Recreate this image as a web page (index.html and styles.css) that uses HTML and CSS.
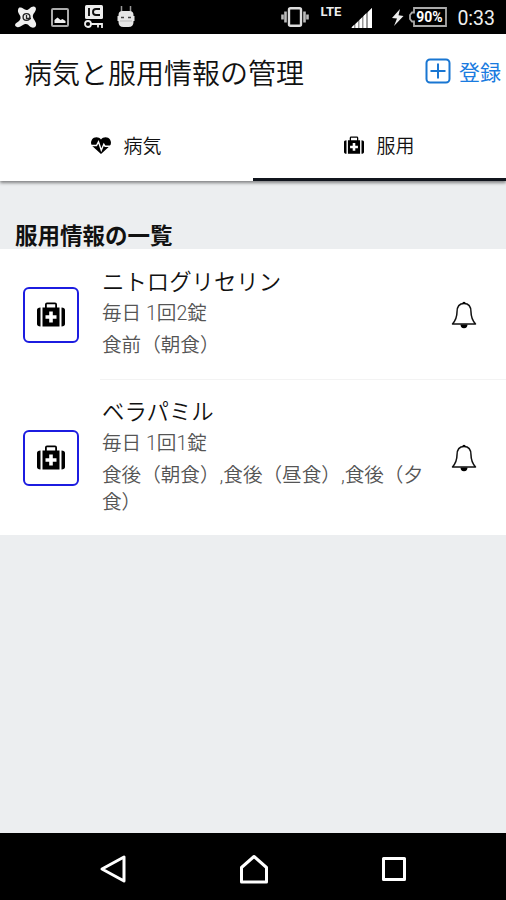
FILE: index.html
```html
<!DOCTYPE html>
<html lang="ja">
<head>
<meta charset="utf-8">
<title>病気と服用情報の管理</title>
<link rel="stylesheet" href="styles.css">
</head>
<body>
<svg class="defs" width="0" height="0">
  <symbol id="medkit" viewBox="0 0 28 26">
    <path d="M3.500 5.500v19C1.200 24.500 0 23.500 0 22V8c0-1.500 1.200-2.500 3.500-2.500zM24.500 5.500v19c2.300 0 3.500-1 3.500-2.500V8c0-1.500-1.200-2.500-3.500-2.500z"/>
    <path fill-rule="evenodd" d="M5.500 5.500H8V2.500Q8 .500 10 .500h8Q20 .500 20 2.500v3h2.500v19h-17zM9.800 5.500h8.400V2.300H9.800zM12.200 9.500v3.700H8.500v3.600h3.700v3.700h3.600v-3.700h3.700v-3.600h-3.700V9.500z"/>
  </symbol>
  <symbol id="bell" viewBox="0 0 26 28">
    <path d="M13 2.500C7.800 2.500 6 6 6 11c0 6-1.500 8.500-4.500 12h23C21.500 19.500 20 17 20 11c0-5-1.800-8.500-7-8.500z" fill="none" stroke="currentColor" stroke-width="1.500" stroke-linejoin="round"/>
    <path d="M11.300 2.500a1.700 1.700 0 0 1 3.400 0zM9.500 23.500h7a3.500 3.700 0 0 1-7 0z"/>
  </symbol>
</svg>
<div class="screen">
  <div class="status">
    <div class="notices">
      <svg width="24" height="24" viewBox="0 0 24 24"><path d="M7 2.500c2 0 3 2.500 5.500 2.500S17 1 20 1.500c3 1 2 4 .500 6-1.500 2-2 3-1.500 5s4 5 3 8-4.500 2.500-6 1-2.500-3-5-2.500S6 23 3 22s-2-3.500 0-4.500 4-3 3.500-5.500S3.500 8 4 5s1.500-2.500 3-2.500z" fill="#f0f0f0"/><circle cx="12.500" cy="12" r="3.400" fill="none" stroke="#222" stroke-width="1.400"/><path d="M12.500 10v3.500H17" fill="none" stroke="#222" stroke-width="1.300"/></svg>
      <svg width="18" height="19" viewBox="0 0 18 19"><rect x="1" y="1" width="16" height="17" rx="1" fill="none" stroke="#aaa" stroke-width="2"/><path d="M3.500 15v-3l3-2.500 3 2.500 2-1 3 2v2z" fill="#eee"/></svg>
      <svg width="20" height="24" viewBox="0 0 20 24"><rect x="1" y="0" width="18" height="14" rx="1.500" fill="#eee"/><path d="M5 3v8M16 4h-4q-3 0-3 3t3 3h4" fill="none" stroke="#111" stroke-width="1.900"/><circle cx="4" cy="19" r="3" fill="none" stroke="#eee" stroke-width="1.800"/><path d="M7 19h11v4M14 19v3.500" fill="none" stroke="#eee" stroke-width="1.800"/></svg>
      <svg width="18" height="22" viewBox="0 0 18 22"><path d="M4.500 6V0M13.500 6V0" stroke="#999" stroke-width="1.500"/><path d="M1.500 9q0-4 4-4h7q4 0 4 4v1h1v5h-1v1q0 5-5 5h-5q-5 0-5-5v-1h-1v-5h1z" fill="#e6e6e6"/><path d="M4 11.500h3M11 11.500h3" stroke="#444" stroke-width="1.500"/><path d="M3 15h12" stroke="#bbb"/></svg>
    </div>
    <div class="system">
      <svg width="28" height="20" viewBox="0 0 28 20"><path d="M1.500 7.500v5M4.500 4.500v11M26.500 7.500v5M23.500 4.500v11" stroke="#bbb" stroke-width="2.600"/><rect x="8" y="1.200" width="12" height="17.600" rx="1.500" fill="none" stroke="#ddd" stroke-width="2.400"/></svg>
      <span class="lte">LTE</span>
      <svg class="signal" width="22" height="21" viewBox="0 0 22 21"><path d="M0 20L21 0v20z" fill="#999"/><path d="M1 20v-1l2-2v3zM4.500 20v-4l2.500-2.500V20zM8.500 20v-8l2.500-2.500V20zM12.500 20V8L15 5.500V20zM17 20V4l4-4v20z" fill="#fff"/></svg>
      <svg class="bolt" width="12" height="17" viewBox="0 0 12 17"><path d="M8 0L0 9l5 .500L2 17l9.500-10-5-.700z" fill="#eee"/></svg>
      <svg class="battery" width="38" height="20" viewBox="0 0 38 20"><path d="M5 1h32v18H5v-4.500H3L1 12V8l2-2.500h2z" fill="none" stroke="#aaa" stroke-width="1.800"/><text x="20.500" y="15" text-anchor="middle" class="charge">90%</text></svg>
      <span class="clock">0:33</span>
    </div>
  </div>
  <header class="header">
    <h1>病気と服用情報の管理</h1>
    <div class="register">
      <svg width="26" height="26" viewBox="0 0 26 26"><rect x="1.500" y="1.500" width="23" height="23" rx="3.500"/><path d="M13 5.500v15M5.500 13h15"/></svg>
      <span>登録</span>
    </div>
  </header>
  <nav class="tabs">
    <div class="tab">
      <svg width="20" height="17" viewBox="0 0 20 17"><path d="M10 2.500C8-.500 3-.700 1 2.500-.500 5-.200 7 1.200 9L10 17l8.800-8c1.400-2 1.700-4 .200-6.500-2-3.200-7-3-9 0z"/><path d="M0 8.500h5.500l2-3.800 2.800 8.500 2.500-6 1.200 2H20" fill="none" stroke="#fff" stroke-width="1.400"/></svg>
      <span>病気</span>
    </div>
    <div class="tab active">
      <svg width="20" height="19"><use href="#medkit"/></svg>
      <span>服用</span>
    </div>
  </nav>
  <main>
    <h2>服用情報の一覧</h2>
    <ul class="list">
      <li class="item">
        <div class="thumb"><svg width="28" height="26"><use href="#medkit"/></svg></div>
        <div class="body">
          <div class="text"><h3>ニトログリセリン</h3><p>毎日 1回2錠</p><p class="timing">食前（朝食）</p></div>
          <svg class="alarm" width="26" height="28"><use href="#bell"/></svg>
        </div>
      </li>
      <li class="item">
        <div class="thumb"><svg width="28" height="26"><use href="#medkit"/></svg></div>
        <div class="body">
          <div class="text"><h3>ベラパミル</h3><p>毎日 1回1錠</p><p class="timing">食後（朝食）,食後（昼食）,食後（夕食）</p></div>
          <svg class="alarm" width="26" height="28"><use href="#bell"/></svg>
        </div>
      </li>
    </ul>
  </main>
  <footer class="navbar">
    <svg width="28" height="30" viewBox="0 0 28 30"><path d="M25 3v24L3 15z"/></svg>
    <svg width="30" height="30" viewBox="0 0 30 30"><path d="M15 2.500L2.500 13.500V28h25V13.500z"/></svg>
    <svg width="26" height="26" viewBox="0 0 26 26"><rect x="2.500" y="2.500" width="21" height="21"/></svg>
  </footer>
</div>
</body>
</html>
```
FILE: styles.css
```css
* { box-sizing: border-box; }
body, h1, h2, h3, p, ul { margin: 0; padding: 0; }
body {
  font-family: Roboto, "Noto Sans CJK JP", sans-serif;
  color: #111;
  background: #eceef0;
}
svg { display: block; flex: none; }
.defs { position: absolute; }
.screen { display: flex; flex-direction: column; height: 900px; }

.status {
  display: flex;
  justify-content: space-between;
  align-items: center;
  height: 34px;
  padding: 0 11px 0 14px;
  background: #000;
  color: #eee;
}
.notices, .system { display: flex; align-items: center; }
.notices { gap: 13px; }
.notices svg:nth-child(2) { margin-right: 2px; }
.lte { margin: -11px 0 0 11px; font-size: 13px; line-height: 14px; font-weight: 700; }
.signal { margin: 2px 0 0 10px; }
.bolt { margin-left: 19px; }
.battery { margin-left: 5px; }
.charge { font-size: 14px; font-weight: 700; fill: #fff; }
.clock { margin-left: 10px; font-size: 19.500px; line-height: 24px; padding-top: 3px; }

.header {
  position: relative;
  z-index: 1;
  display: flex;
  justify-content: space-between;
  align-items: center;
  height: 77px;
  padding: 2px 5px 0 24px;
  background: #fff;
}
h1 { margin-top: 2px; font-size: 28px; font-weight: 350; line-height: 40px; }
.register { display: flex; align-items: center; gap: 8px; margin-top: -1px; color: #197be0; font-size: 21px; line-height: 30px; }
.register svg { fill: none; stroke: #1976d2; stroke-width: 2; margin-top: -4px; }

.tabs {
  display: flex;
  height: 70px;
  background: #fff;
  box-shadow: 0 2px 3px rgba(0, 0, 0, .45);
}
.tab {
  flex: 1;
  display: flex;
  align-items: center;
  justify-content: center;
  gap: 12px;
  padding: 4px 0 0;
  font-size: 19px;
  font-weight: 350;
  line-height: 28px;
  border-bottom: 3px solid transparent;
}
.tab svg { margin-top: -3px; }
.active { border-color: #11151d; }

main { flex: 1; }
h2 { padding: 38px 15px 0; height: 68px; font-size: 22.500px; line-height: 34px; font-weight: 700; }
.list { list-style: none; background: #fff; }
.item { display: flex; align-items: center; padding-left: 23px; }
.thumb {
  display: flex;
  align-items: center;
  justify-content: center;
  width: 56px;
  height: 56px;
  border: 2px solid #1c1ce0;
  border-radius: 6px;
}
.body { flex: 1; display: flex; align-items: center; justify-content: space-between; margin-left: 21px; padding: 17px 29px 15px 2px; }
.item:first-child { padding-top: 1px; }
.item:first-child .body { height: 130px; border-bottom: 1px solid #f3f3f3; }
.item:last-child .body { height: 155px; }
.text { width: 326px; margin-top: -5px; color: #555; font-size: 19.600px; font-weight: 350; line-height: 27px; }
h3 { margin: -1px 0 2px; color: #111; font-size: 22.400px; font-weight: 350; line-height: 32px; }
.timing { margin-top: 5px; }
.alarm { margin-top: -2px; }

.navbar {
  display: flex;
  align-items: center;
  justify-content: space-between;
  height: 67px;
  padding: 4px 99px 0 99px;
  background: #000;
}
.navbar svg { fill: none; stroke: #fff; stroke-width: 3; stroke-linejoin: round; }
```
